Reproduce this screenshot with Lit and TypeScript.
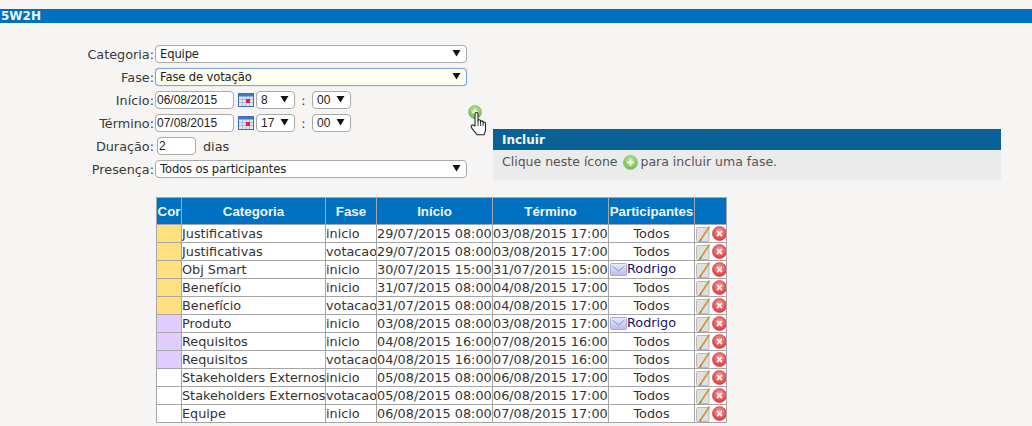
import { LitElement, html, css, svg } from "lit";
import { customElement } from "lit/decorators.js";

const Y = "#ffdf80", P = "#e0ccff", W = "#ffffff";
type Row = [string, string, string, string, string, string, string];
const rows: Row[] = [
  [Y, "Justificativas", "inicio", "29/07/2015 08:00", "03/08/2015 17:00", "Todos", ""],
  [Y, "Justificativas", "votacao", "29/07/2015 08:00", "03/08/2015 17:00", "Todos", ""],
  [Y, "Obj Smart", "inicio", "30/07/2015 15:00", "31/07/2015 15:00", "Rodrigo", "m"],
  [Y, "Benefício", "inicio", "31/07/2015 08:00", "04/08/2015 17:00", "Todos", ""],
  [Y, "Benefício", "votacao", "31/07/2015 08:00", "04/08/2015 17:00", "Todos", ""],
  [P, "Produto", "inicio", "03/08/2015 08:00", "03/08/2015 17:00", "Rodrigo", "m"],
  [P, "Requisitos", "inicio", "04/08/2015 16:00", "07/08/2015 16:00", "Todos", ""],
  [P, "Requisitos", "votacao", "04/08/2015 16:00", "07/08/2015 16:00", "Todos", ""],
  [W, "Stakeholders Externos", "inicio", "05/08/2015 08:00", "06/08/2015 17:00", "Todos", ""],
  [W, "Stakeholders Externos", "votacao", "05/08/2015 08:00", "06/08/2015 17:00", "Todos", ""],
  [W, "Equipe", "inicio", "06/08/2015 08:00", "07/08/2015 17:00", "Todos", ""],
];

const plus = (s: number) => html`<svg width=${s} height=${s} viewBox="0 0 16 16">
  <defs><radialGradient id="g" cx="50%" cy="35%" r="70%"><stop offset="0" stop-color="#c4e8a4"/><stop offset="1" stop-color="#6cb548"/></radialGradient></defs>
  <circle cx="8" cy="8" r="7.5" fill="url(#g)" stroke="#8cc271" stroke-width="0.8"/>
  <path d="M8 4.500v7M4.500 8h7" stroke="#eef7e4" stroke-width="2"/></svg>`;

const arrow = html`<svg class="arr" width="9" height="8" viewBox="0 0 9 8"><path d="M0.5 1h8L4.5 7.5z" fill="#111"/></svg>`;

const cal = html`<svg class="cal" width="16" height="14" viewBox="0 0 16 14">
  <rect x="0.5" y="0.500" width="15" height="13" fill="#dfe7f4" stroke="#3b6fc0"/>
  <rect x="1" y="1" width="14" height="2.500" fill="#3f76c8"/>
  <path d="M1 6.500h14M1 9.500h14M4.500 4v9M8 4v9M11.500 4v9" stroke="#9fb2cf" stroke-width="0.8"/>
  <rect x="8" y="6" width="4" height="4" fill="#e0262b"/></svg>`;

const mail = html`<svg class="mail" width="17" height="13" viewBox="0 0 17 13">
  <defs><linearGradient id="mg" x1="0" y1="0" x2="0" y2="1"><stop offset="0" stop-color="#ececfc"/><stop offset="1" stop-color="#b9b9ee"/></linearGradient></defs>
  <rect x="0.500" y="0.500" width="16" height="12" rx="1" fill="url(#mg)" stroke="#a8a8da"/>
  <path d="M2.500 3l6 5 6-5" fill="none" stroke="#8a8ad0" stroke-width="1"/></svg>`;

const edit = svg`<svg width="15" height="16" viewBox="0 0 15 16">
  <rect x="0.500" y="1.500" width="12.500" height="14" rx="1" fill="#e0e0e0" stroke="#b8b8b8"/>
  <path d="M13.500 0.500L4.500 14" stroke="#c99a3a" stroke-width="1.700"/>
  <path d="M5 13.200L3.600 15.500" stroke="#666" stroke-width="1.100"/></svg>`;

const del = svg`<svg width="15" height="15" viewBox="0 0 15 15">
  <defs><radialGradient id="r" cx="50%" cy="35%" r="70%"><stop offset="0" stop-color="#f49a9a"/><stop offset="1" stop-color="#dc3036"/></radialGradient></defs>
  <circle cx="7.500" cy="7.500" r="7" fill="url(#r)" stroke="#c74448" stroke-width="0.7"/>
  <path d="M5 5l5 5M10 5l-5 5" stroke="#fbeeee" stroke-width="1.900"/></svg>`;

@customElement("app-root")
export class AppRoot extends LitElement {
  static styles = css`
    :host { display: block; width: 1032px; height: 426px; overflow: hidden; position: relative;
      background: #f6f5f4; font-family: "DejaVu Sans", Verdana, sans-serif; font-size: 12.800px; color: #333; }
    .bar { margin-top: 9px; height: 14px; background: #0070c0; color: #eef6fb; font-weight: bold;
      font-size: 12px; line-height: 15px; padding-left: 1px; }
    .top { display: flex; padding-top: 22px; }
    .form { display: grid; grid-template-columns: 154px auto; row-gap: 5px; }
    .lbl { text-align: right; line-height: 20px; height: 18px; color: #3a3a3a; white-space: nowrap; }
    .ctl { display: flex; align-items: center; height: 18px; padding-left: 1px; }
    .sel, .inp { box-sizing: border-box; height: 18px; border: 1px solid #a9a9a9; border-radius: 4px;
      background: #fff; line-height: 17px; color: #222; position: relative; white-space: nowrap; }
    .sel { padding-left: 4px; font-size: 11.600px; letter-spacing: -0.150px; }
    .wide { width: 312px; }
    .focus { background: #fffff0; border: 1px solid #7ca5dd; box-shadow: 0 0 1px #7ca5dd; }
    .arr { position: absolute; right: 5px; top: 3px; }
    .inp { padding-left: 1px; font-family: "Liberation Sans", Arial, sans-serif; font-size: 12px; }
    .date { width: 79px; }
    .cal { margin: 0 2px 0 4px; flex: none; }
    .time { width: 39px; padding-left: 4px; font-family: "Liberation Sans", Arial, sans-serif; font-size: 12px; letter-spacing: 0; }
    .colon { width: 17px; text-align: center; line-height: 20px; height: 18px; }
    .dur { width: 39px; margin-left: 2px; }
    .dias { margin-left: 7px; line-height: 20px; height: 18px; }
    .addcol { padding: 60px 0 0 1px; height: 20px; }
    .add { display: block; width: 14px; height: 14px; }
    .add svg { display: block; }
    .hand { position: absolute; left: 470px; top: 111px; }
    .tip { position: absolute; left: 493px; top: 129px; width: 508px; height: 51px; background: #ebebeb; }
    .tip-h { height: 21px; background: #0a6195; color: #f2f7fb; font-weight: bold; font-size: 12px;
      line-height: 22px; padding-left: 9px; }
    .tip-b { display: flex; align-items: center; padding: 2px 0 0 9px; color: #555; font-size: 12.500px; height: 18px; white-space: pre; }
    .tip-b svg { margin: 2px 3px 0 5px; }
    .tablewrap { padding: 19px 0 0 156px; }
    table { border-collapse: collapse; table-layout: fixed; width: 570px; }
    th, td { border: 1px solid #a6a6a6; padding: 0; white-space: nowrap; overflow: hidden; }
    th { background: #0070c0; color: #eef6fb; height: 26px; font-family: "Liberation Sans", Arial, sans-serif;
      font-size: 13.300px; font-weight: bold; text-align: center; }
    td { background: #fff; height: 17px; line-height: 17px; font-size: 12.800px; color: #333; }
    td.c { text-align: center; }
    td.who { color: #1a1060; }
    .whoin { display: flex; align-items: center; margin-left: 1px; line-height: 15px; }
    .whoin span { position: relative; top: -1px; }
    .acts { display: flex; align-items: center; padding-left: 1px; gap: 1px; height: 17px; }
    .acts svg { display: block; flex: none; }
  `;

  render() {
    return html`
      <div class="bar">5W2H</div>
      <div class="top">
        <div class="form">
          <div class="lbl">Categoria:</div>
          <div class="ctl"><div class="sel wide">Equipe${arrow}</div></div>
          <div class="lbl">Fase:</div>
          <div class="ctl"><div class="sel wide focus">Fase de votação${arrow}</div></div>
          <div class="lbl">Início:</div>
          <div class="ctl"><div class="inp date">06/08/2015</div>${cal}<div class="sel time">8${arrow}</div><div class="colon">:</div><div class="sel time">00${arrow}</div></div>
          <div class="lbl">Término:</div>
          <div class="ctl"><div class="inp date">07/08/2015</div>${cal}<div class="sel time">17${arrow}</div><div class="colon">:</div><div class="sel time">00${arrow}</div></div>
          <div class="lbl">Duração:</div>
          <div class="ctl"><div class="inp dur">2</div><span class="dias">dias</span></div>
          <div class="lbl">Presença:</div>
          <div class="ctl"><div class="sel wide">Todos os participantes${arrow}</div></div>
        </div>
        <div class="addcol"><span class="add">${plus(14)}</span></div>
      </div>
      <div class="tablewrap">
        <table>
          <colgroup><col style="width:25px"/><col style="width:144px"/><col style="width:51px"/><col style="width:116px"/><col style="width:116px"/><col style="width:86px"/><col style="width:32px"/></colgroup>
          <thead><tr><th>Cor</th><th>Categoria</th><th>Fase</th><th>Início</th><th>Término</th><th>Participantes</th><th></th></tr></thead>
          <tbody>
            ${rows.map((r) => html`<tr>
              <td style="background:${r[0]}"></td>
              <td>${r[1]}</td><td>${r[2]}</td><td>${r[3]}</td><td>${r[4]}</td>
              ${r[6] ? html`<td class="who"><div class="whoin">${mail}<span>${r[5]}</span></div></td>` : html`<td class="c">${r[5]}</td>`}
              <td><div class="acts">${edit}${del}</div></td>
            </tr>`)}
          </tbody>
        </table>
      </div>
      <svg class="hand" width="20" height="26" viewBox="0 0 20 26">
        <path d="M5 3c0-2 3-2 3 0v7c0-1.600 2.600-1.600 2.600 0v1c0-1.500 2.500-1.500 2.500 0v1c0-1.400 2.400-1.400 2.400.3v6c0 2.500-.8 3.500-1.500 5.500H7c-1-2.500-5-5-5.800-8-.4-1.500 1.200-2.500 2.400-1.500L5 15z" fill="#fff" stroke="#222" stroke-width="1.100" stroke-linejoin="round"/>
        <path d="M8 10v5M10.600 11v4M13.100 12v3" stroke="#222" stroke-width="0.900"/>
      </svg>
      <div class="tip">
        <div class="tip-h">Incluir</div>
        <div class="tip-b">Clique neste ícone${plus(15)}para incluir uma fase.</div>
      </div>
    `;
  }
}
